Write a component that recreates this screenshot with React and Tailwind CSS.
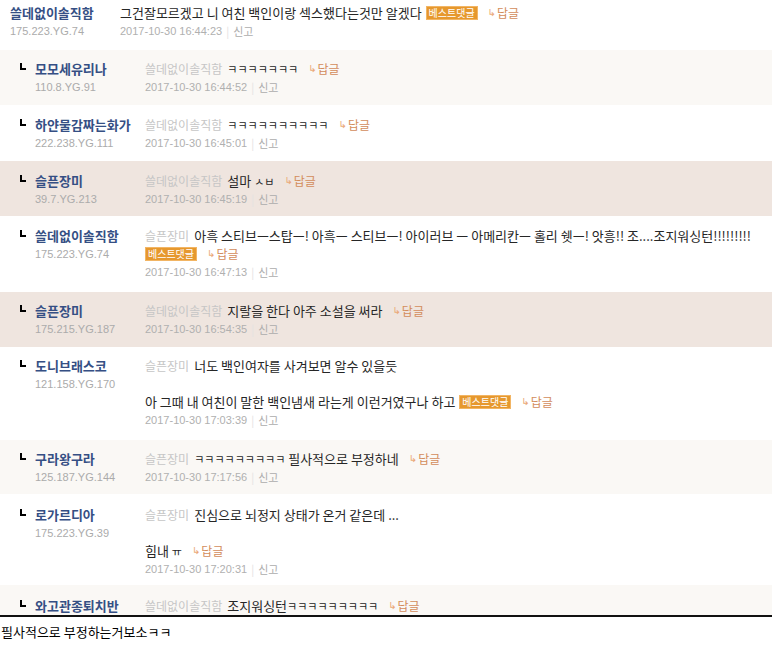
import React from 'react';

const KR = '"Noto Sans CJK KR", "Noto Sans", sans-serif';
const NUM = '"Liberation Sans", "Noto Sans CJK KR", sans-serif';

// comment rows, in order as they appear on the page
const comments = [
  {
    top: true,
    name: '쓸데없이솔직함',
    ip: '175.223.YG.74',
    bg: 'bg-white',
    pad: 'pt-[4px] pb-[10px]',
    lines: [{ text: '그건잘모르겠고 니 여친 백인이랑 섹스했다는것만 알겠다', best: true, reply: true }],
    date: '2017-10-30 16:44:23'
  },
  {
    name: '모모세유리나',
    ip: '110.8.YG.91',
    bg: 'bg-[#faf8f5]',
    pad: 'pt-[10px] pb-[9px]',
    to: '쓸데없이솔직함',
    lines: [{ text: 'ㅋㅋㅋㅋㅋㅋㅋ', reply: true }],
    date: '2017-10-30 16:44:52'
  },
  {
    name: '하얀물감짜는화가',
    ip: '222.238.YG.111',
    bg: 'bg-white',
    pad: 'pt-[11px] pb-[9px]',
    to: '쓸데없이솔직함',
    lines: [{ text: 'ㅋㅋㅋㅋㅋㅋㅋㅋㅋㅋ', reply: true }],
    date: '2017-10-30 16:45:01'
  },
  {
    name: '슬픈장미',
    ip: '39.7.YG.213',
    bg: 'bg-[#efe5df]',
    pad: 'pt-[11px] pb-[8px]',
    to: '쓸데없이솔직함',
    lines: [{ text: '설마 ㅅㅂ', reply: true }],
    date: '2017-10-30 16:45:19'
  },
  {
    name: '쓸데없이솔직함',
    ip: '175.223.YG.74',
    bg: 'bg-white',
    pad: 'pt-[11px] pb-[11px]',
    to: '슬픈장미',
    lines: [
      { text: '아흑 스티브ㅡ스탑ㅡ! 아흑ㅡ 스티브ㅡ! 아이러브 ㅡ 아메리칸ㅡ 홀리 쉣ㅡ! 앗흥!! 조....조지워싱턴!!!!!!!!!' },
      { text: '', best: true, reply: true }
    ],
    date: '2017-10-30 16:47:13'
  },
  {
    name: '슬픈장미',
    ip: '175.215.YG.187',
    bg: 'bg-[#efe5df]',
    pad: 'pt-[10px] pb-[9px]',
    to: '쓸데없이솔직함',
    lines: [{ text: '지랄을 한다 아주 소설을 써라', reply: true }],
    date: '2017-10-30 16:54:35'
  },
  {
    name: '도니브래스코',
    ip: '121.158.YG.170',
    bg: 'bg-white',
    pad: 'pt-[10px] pb-[11px]',
    to: '슬픈장미',
    lines: [
      { text: '너도 백인여자를 사겨보면 알수 있을듯' },
      { text: '' },
      { text: '아 그때 내 여친이 말한 백인냄새 라는게 이런거였구나 하고', best: true, reply: true }
    ],
    date: '2017-10-30 17:03:39'
  },
  {
    name: '구라왕구라',
    ip: '125.187.YG.144',
    bg: 'bg-[#faf8f5]',
    pad: 'pt-[10px] pb-[8px]',
    to: '슬픈장미',
    lines: [{ text: 'ㅋㅋㅋㅋㅋㅋㅋㅋㅋ 필사적으로 부정하네', reply: true }],
    date: '2017-10-30 17:17:56'
  },
  {
    name: '로가르디아',
    ip: '175.223.YG.39',
    bg: 'bg-white',
    pad: 'pt-[12px] pb-[7px]',
    to: '슬픈장미',
    lines: [
      { text: '진심으로 뇌정지 상태가 온거 같은데 ...' },
      { text: '' },
      { text: '힘내 ㅠ', reply: true }
    ],
    date: '2017-10-30 17:20:31'
  },
  {
    // last row is cut by the bottom rule, only its first line shows
    name: '와고관종퇴치반',
    bg: 'bg-[#faf8f5]',
    pad: 'pt-[12px]',
    to: '쓸데없이솔직함',
    lines: [{ text: '조지워싱턴ㅋㅋㅋㅋㅋㅋㅋㅋㅋ', reply: true }]
  }
];

// bare jamo like ㅋ ㅅ ㅠ render small in the original (ㅡ used as a dash stays normal)
const Body = ({ text }) => (
  <span>
    {text.split(/([ㄱ-ㅠ]+)/).map((part, i) =>
      /^[ㄱ-ㅠ]+$/.test(part) ? (
        <span key={i} className="text-[11px]">{part}</span>
      ) : (
        part
      )
    )}
  </span>
);

const BestBadge = ({ flush }) => (
  <span
    className={`inline-block h-[14px] px-[2px] bg-[#e6982e] border border-[#f2b564] text-white text-[10px] leading-[12px] ${flush ? '' : 'ml-[4px]'}`}
  >
    베스트댓글
  </span>
);

const ReplyLink = () => (
  <span className="inline-flex items-center ml-[10px]">
    <span className="text-[10px] text-[#eaa877]" style={{ fontFamily: '"DejaVu Sans", sans-serif' }}>↳</span>
    <span className="text-[12px] text-[#d38d5c] ml-[1px]">답글</span>
  </span>
);

const Comment = ({ c }) => (
  <div className={`flex ${c.bg} ${c.pad} ${c.top ? 'pl-[10px]' : 'pl-[20px]'}`}>
    {!c.top && (
      <div className="w-[15px] shrink-0">
        <div className="w-[6px] h-[7px] mt-[3px] border-l-2 border-b-2 border-black" />
      </div>
    )}
    <div className="w-[110px] shrink-0">
      <div className="text-[13px] leading-[18px] font-bold text-[#354f84] whitespace-nowrap">{c.name}</div>
      {c.ip && <div className="text-[11px] leading-[18px] text-[#ababab]" style={{ fontFamily: NUM }}>{c.ip}</div>}
    </div>
    <div className="flex-1 min-w-0">
      {c.lines.map((l, i) => (
        <div key={i} className="h-[18px] leading-[18px] text-[13px] text-[#262626] whitespace-nowrap flex items-center">
          {i === 0 && c.to && <span className="text-[12px] text-[#c6c6c6] mr-[5px]">{c.to}</span>}
          {l.text && <Body text={l.text} />}
          {l.best && <BestBadge flush={!l.text} />}
          {l.reply && <ReplyLink />}
        </div>
      ))}
      {c.date && (
        <div className="h-[18px] leading-[18px] text-[11px] text-[#b0b0b0] flex items-center">
          <span style={{ fontFamily: NUM }}>{c.date}</span>
          <span className="mx-[4px] text-[#e2e2e2]">|</span>
          <span className="text-[#adadad]">신고</span>
        </div>
      )}
    </div>
  </div>
);

export default function App() {
  return (
    <div className="w-[774px] h-[648px] bg-white overflow-hidden" style={{ fontFamily: KR }}>
      <div className="w-[772px]">
        {comments.map((c, i) => (
          <Comment key={i} c={c} />
        ))}
      </div>
      <div className="w-[772px] border-t-2 border-[#111]" />
      <div className="pt-[5px] pl-[1px] text-[13px] leading-[20px] text-black">필사적으로 부정하는거보소ㅋㅋ</div>
    </div>
  );
}
